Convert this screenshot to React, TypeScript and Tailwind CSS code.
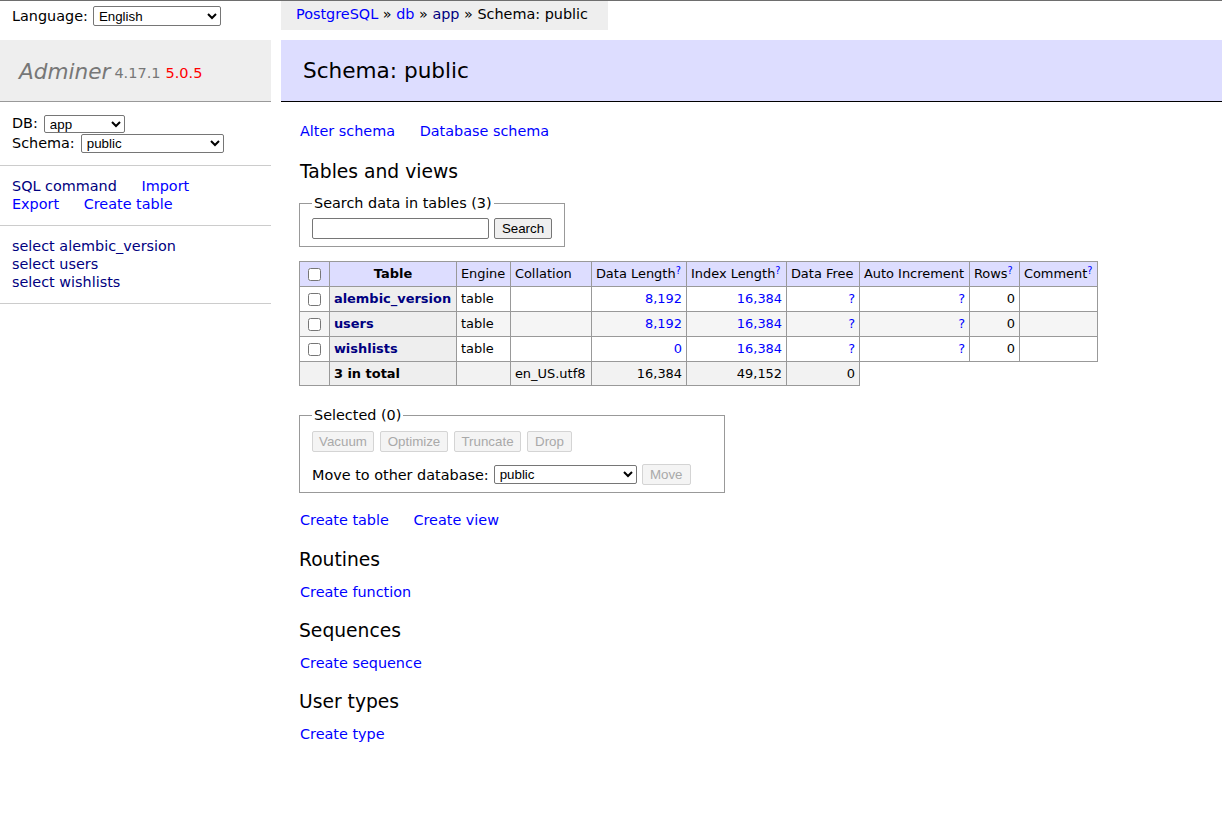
import React from 'react';

const BLUE = 'text-[#0000ff]';
const NAVY = 'text-[#000080]';

const selectCls =
    "appearance-auto border border-[#767676] rounded-[2px] bg-white text-black font-['Liberation_Sans',Arial,sans-serif] text-[13.33px] leading-[16px] pl-[1px]";
const buttonCls =
    "border border-[#767676] rounded-[2px] bg-[#efefef] font-['Liberation_Sans',Arial,sans-serif] text-[13.33px] leading-[15px] px-[6px] h-[21px]";
const disabledCls =
    "border border-[#d4d4d4] rounded-[2px] bg-[#f4f4f4] text-[#a9a9a9] font-['Liberation_Sans',Arial,sans-serif] text-[13.33px] leading-[15px] px-[6px] h-[21px]";

type Row = { name: string; data: string; index: string };

const ROWS: Row[] = [
    { name: 'alembic_version', data: '8,192', index: '16,384' },
    { name: 'users', data: '8,192', index: '16,384' },
    { name: 'wishlists', data: '0', index: '16,384' },
];

function Help() {
    return <sup className={`${BLUE} text-[9.7px]`}>?</sup>;
}

function Sidebar() {
    return (
        <aside className="w-[271px] shrink-0">
            {/* Language */}
            <div className="h-[39px] pb-[9px] px-[12px] flex items-center gap-[5px]">
                <span>Language:</span>
                <select className={`${selectCls} w-[128px] h-[20px]`} defaultValue="en">
                    <option value="en">English</option>
                </select>
            </div>

            {/* Logo */}
            <h1 className="h-[62px] bg-[#eee] border-b border-[#999] flex items-center pl-[19px] pt-[1px]">
                <span className="text-[21.6px] italic text-[#777] leading-[27px]">Adminer</span>
                <span className="text-[14.5px] text-[#777] ml-[4px] mt-[4px]">4.17.1</span>
                <span className="text-[14.5px] text-[#ff0000] ml-[5px] mt-[4px]">5.0.5</span>
            </h1>

            {/* DB / schema */}
            <div className="px-[12px] py-[12px] border-b border-[#ccc] leading-[19px]">
                <div className="flex items-center gap-[6px] h-[19px]">
                    <span>DB:</span>
                    <select className={`${selectCls} w-[81px] h-[18px]`} defaultValue="app">
                        <option value="app">app</option>
                    </select>
                </div>
                <div className="flex items-center gap-[6px] h-[20px]">
                    <span>Schema:</span>
                    <select className={`${selectCls} w-[143px] h-[19px]`} defaultValue="public">
                        <option value="public">public</option>
                    </select>
                </div>
            </div>

            {/* Links */}
            <div className="px-[12px] pt-[11px] pb-[12px] border-b border-[#ccc]">
                <p>
                    <a className={`${NAVY} mr-[20px]`}>SQL command</a>{' '}
                    <a className={BLUE}>Import</a>
                </p>
                <p>
                    <a className={`${BLUE} mr-[20px]`}>Export</a>{' '}
                    <a className={BLUE}>Create table</a>
                </p>
            </div>

            {/* Tables */}
            <ul className="px-[12px] pt-[11px] pb-[12px] border-b border-[#ccc]">
                {ROWS.map(r => (
                    <li key={r.name}>
                        <a className={NAVY}>select {r.name}</a>
                    </li>
                ))}
            </ul>
        </aside>
    );
}

function TablesList() {
    const td = 'border border-[#999] px-[3.9px] py-[2.6px]';
    return (
        <table className="mt-[14px] border-collapse table-fixed w-[799px] text-[12.96px] leading-[16px]">
            <colgroup>
                <col className="w-[30px]" />
                <col className="w-[127px]" />
                <col className="w-[54px]" />
                <col className="w-[81px]" />
                <col className="w-[95px]" />
                <col className="w-[100px]" />
                <col className="w-[73px]" />
                <col className="w-[110px]" />
                <col className="w-[50px]" />
                <col className="w-[78px]" />
            </colgroup>
            <thead>
                <tr className="h-[25px] bg-[#ddf] whitespace-nowrap">
                    <td className={`${td} text-center`}>
                        <input type="checkbox" className="m-0 align-middle w-[13px] h-[13px]" />
                    </td>
                    <th className={`${td} text-center font-bold`}>Table</th>
                    <td className={td}>Engine</td>
                    <td className={td}>Collation</td>
                    <td className={td}>Data Length<Help /></td>
                    <td className={td}>Index Length<Help /></td>
                    <td className={td}>Data Free</td>
                    <td className={td}>Auto Increment</td>
                    <td className={td}>Rows<Help /></td>
                    <td className={td}>Comment<Help /></td>
                </tr>
            </thead>
            <tbody>
                {ROWS.map((r, i) => (
                    <tr key={r.name} className={i % 2 === 1 ? 'h-[25px] bg-[#f5f5f5]' : 'h-[25px] bg-white'}>
                        <td className={`${td} text-center`}>
                            <input type="checkbox" className="m-0 align-middle w-[13px] h-[13px]" />
                        </td>
                        <th className={`${td} bg-[#eee] text-left font-bold ${NAVY}`}>{r.name}</th>
                        <td className={td}>table</td>
                        <td className={td}></td>
                        <td className={`${td} text-right ${BLUE}`}>{r.data}</td>
                        <td className={`${td} text-right ${BLUE}`}>{r.index}</td>
                        <td className={`${td} text-right ${BLUE}`}>?</td>
                        <td className={`${td} text-right ${BLUE}`}>?</td>
                        <td className={`${td} text-right`}>0</td>
                        <td className={td}></td>
                    </tr>
                ))}
                <tr className="h-[24px] bg-[#f2f2f2]">
                    <td className={td}></td>
                    <th className={`${td} bg-[#eee] text-left font-bold`}>3 in total</th>
                    <td className={td}></td>
                    <td className={td}>en_US.utf8</td>
                    <td className={`${td} text-right`}>16,384</td>
                    <td className={`${td} text-right`}>49,152</td>
                    <td className={`${td} text-right`}>0</td>
                </tr>
            </tbody>
        </table>
    );
}

function Section({ title, link }: { title: string; link: string }) {
    return (
        <>
            <h3 className="mt-[18.72px] text-[18.72px] leading-[23.4px]">{title}</h3>
            <p className="mt-[11px] pl-[1px]">
                <a className={BLUE}>{link}</a>
            </p>
        </>
    );
}

export default function App() {
    return (
        <div className="min-h-[828px] border-t border-[#6e6e6e] bg-white text-black font-['DejaVu_Sans',Verdana,sans-serif] text-[14.4px] leading-[18px] flex">
            <Sidebar />

            <main className="ml-[10px] flex-1">
                {/* Breadcrumb */}
                <div className="h-[29px] w-fit bg-[#eee] px-[15px] pr-[20px] leading-[26px] whitespace-nowrap">
                    <a className={BLUE}>PostgreSQL</a> » <a className={BLUE}>db</a> » <a className={NAVY}>app</a> » Schema: public
                </div>

                <h2 className="mt-[10px] h-[62px] bg-[#ddf] border-b border-black flex items-center px-[22px] text-[21.6px] leading-[27px]">
                    Schema: public
                </h2>

                <div className="pl-[18px] pt-[20px]">
                    <p className="pl-[1px]">
                        <a className={`${BLUE} mr-[20px]`}>Alter schema</a>{' '}
                        <a className={BLUE}>Database schema</a>
                    </p>

                    <h3 className="mt-[19.5px] text-[18.72px] leading-[23.4px] pl-[1px]">Tables and views</h3>

                    <fieldset className="mt-[11.5px] inline-block border border-[#999] px-[12px] pb-[7px] pt-0">
                        <legend className="px-[2px]">Search data in tables (3)</legend>
                        <div className="flex items-center gap-[5px] pt-[6px]">
                            <input
                                type="text"
                                className="w-[177px] h-[21px] border border-[#767676] rounded-[2px] bg-white"
                            />
                            <button className={`${buttonCls} w-[58px]`}>Search</button>
                        </div>
                    </fieldset>

                    <TablesList />

                    <fieldset className="mt-[20px] w-[426px] border border-[#999] px-[12px] pb-[7px] pt-0">
                        <legend className="px-[2px]">Selected (0)</legend>
                        <div className="flex gap-[6px] pt-[7px]">
                            <button disabled className={`${disabledCls} w-[62px]`}>Vacuum</button>
                            <button disabled className={`${disabledCls} w-[68px]`}>Optimize</button>
                            <button disabled className={`${disabledCls} w-[67px]`}>Truncate</button>
                            <button disabled className={`${disabledCls} w-[45px]`}>Drop</button>
                        </div>
                        <div className="flex items-center mt-[12px] h-[21px]">
                            <span>Move to other database:</span>
                            <select className={`${selectCls} ml-[5px] w-[143px] h-[19px]`} defaultValue="public">
                                <option value="public">public</option>
                            </select>
                            <button disabled className={`${disabledCls} ml-[5px] w-[49px]`}>Move</button>
                        </div>
                    </fieldset>

                    <p className="mt-[18px] pl-[1px]">
                        <a className={`${BLUE} mr-[20px]`}>Create table</a>{' '}
                        <a className={BLUE}>Create view</a>
                    </p>

                    <Section title="Routines" link="Create function" />
                    <Section title="Sequences" link="Create sequence" />
                    <Section title="User types" link="Create type" />
                </div>
            </main>
        </div>
    );
}
